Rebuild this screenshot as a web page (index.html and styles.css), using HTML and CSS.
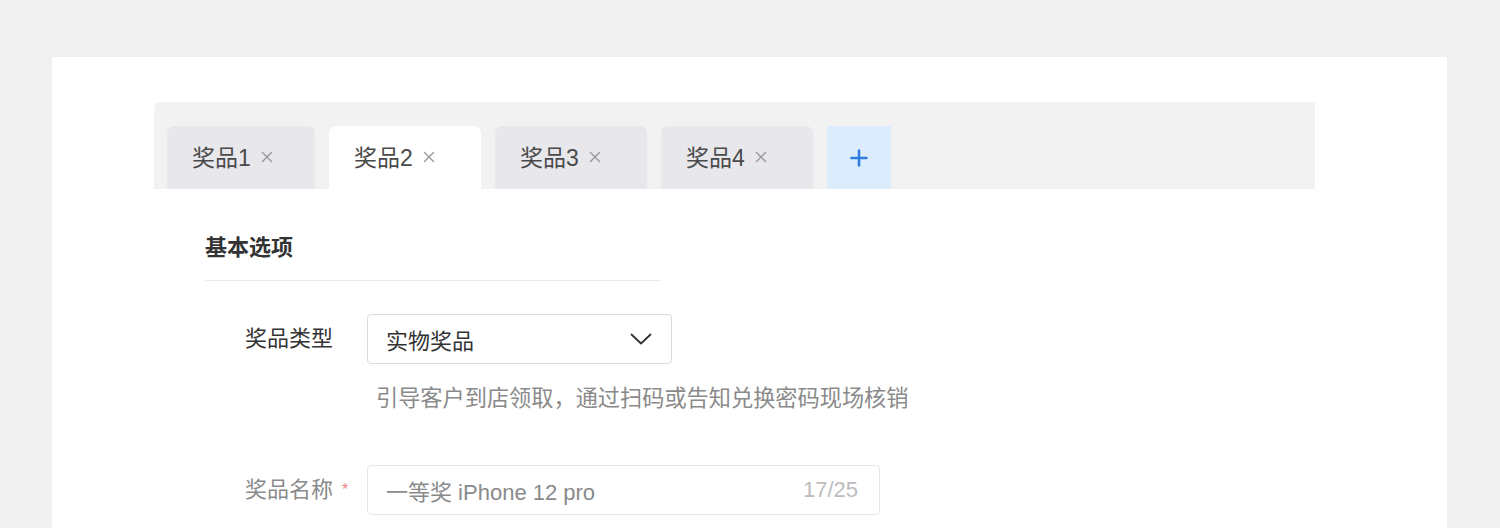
FILE: index.html
```html
<!DOCTYPE html>
<html lang="zh-CN">
<head>
<meta charset="utf-8">
<meta name="viewport" content="width=device-width,initial-scale=1">
<title>奖品设置</title>
<link rel="stylesheet" href="styles.css">
</head>
<body>
<div class="page">
  <div class="card">
    <!-- prize tabs -->
    <div class="tabbar">
      <div class="tab">奖品1<svg class="x" viewBox="0 0 12 12"><path d="M1 1l10 10M11 1L1 11"/></svg></div>
      <div class="tab on">奖品2<svg class="x" viewBox="0 0 12 12"><path d="M1 1l10 10M11 1L1 11"/></svg></div>
      <div class="tab">奖品3<svg class="x" viewBox="0 0 12 12"><path d="M1 1l10 10M11 1L1 11"/></svg></div>
      <div class="tab">奖品4<svg class="x" viewBox="0 0 12 12"><path d="M1 1l10 10M11 1L1 11"/></svg></div>
      <div class="tab add" aria-label="添加奖品">
        <svg width="18" height="18" viewBox="0 0 18 18" aria-hidden="true"><path d="M9 1.5v15M1.5 9h15" stroke="#2f7de1" stroke-width="2.6" stroke-linecap="round"/></svg>
      </div>
    </div>

    <div class="body">
      <h2 class="sec">基本选项</h2>

      <div class="row">
        <div class="lbl">奖品类型</div>
        <div class="req"></div>
        <div class="ctl">
          <div class="select">
            <span>实物奖品</span>
            <svg width="22" height="12" viewBox="0 0 22 12" aria-hidden="true"><path d="M1.5 1.5l9.5 9 9.5-9" fill="none" stroke="#333" stroke-width="1.8" stroke-linecap="round" stroke-linejoin="round"/></svg>
          </div>
          <p class="hint">引导客户到店领取，通过扫码或告知兑换密码现场核销</p>
        </div>
      </div>

      <div class="row r2">
        <div class="lbl muted">奖品名称</div>
        <div class="req">*</div>
        <div class="ctl">
          <div class="input">
            <span>一等奖 iPhone 12 pro</span>
            <span class="cnt">17/25</span>
          </div>
        </div>
      </div>
    </div>
  </div>
</div>
</body>
</html>
```

FILE: styles.css
```css
:root{--bg:#f0f0f0;--txt:#333;--muted:#8a8a8a;--line:#ebebeb;--blue:#2f7de1}
*{box-sizing:border-box}
body{margin:0;background:var(--bg);color:var(--txt);font-family:"Liberation Sans","Noto Sans CJK SC",sans-serif;overflow:hidden}
.page{padding:57px 53px 0 52px;height:100vh}
.card{background:#fff;height:100%;padding:45px 0 0 102px}

.tabbar{width:1161px;height:87px;background:#f2f2f2;border-radius:6px 0 0 0;display:flex;align-items:flex-end;gap:14px;padding-left:13px}
.tab{width:152px;height:63px;display:flex;align-items:center;padding:0 0 3px 25px;background:#e8e8ec;border-radius:7px 7px 0 0;font-size:23px;color:#4a4a4a}
.tab:first-child{width:148px}
.tab.on{background:#fff}
.tab .x{width:12px;height:12px;margin:2px 0 0 10px;fill:none;stroke:#999;stroke-width:1.4}
.tab.add{width:64px;padding:0;justify-content:center;background:#ddecfd;border-radius:0}

.body{padding-left:51px}
.sec{width:456px;margin:44px 0 0;padding-bottom:17px;border-bottom:1px solid var(--line);font-size:22px;line-height:30px;font-weight:700}

.row{display:grid;grid-template-columns:128px 34px auto;margin-top:33px}
.row.r2{margin-top:51px}
.lbl{font-size:22px;line-height:50px;text-align:right;color:var(--txt)}
.lbl.muted{color:var(--muted)}
.req{color:#ef7f86;font-size:16px;line-height:50px;padding-left:9px}
.select,.input{display:flex;align-items:center;justify-content:space-between;height:50px;border:1px solid #dcdcdc;border-radius:4px;padding:0 19px 0 18px;font-size:22px}
.select{width:305px}
.input{width:513px;border-color:#e6e6e6;color:var(--muted);padding-right:21px}
.input .cnt{color:#bdbdbd}
.hint{margin:20px 0 0 9px;font-size:22.2px;line-height:30px;color:var(--muted)}
```
